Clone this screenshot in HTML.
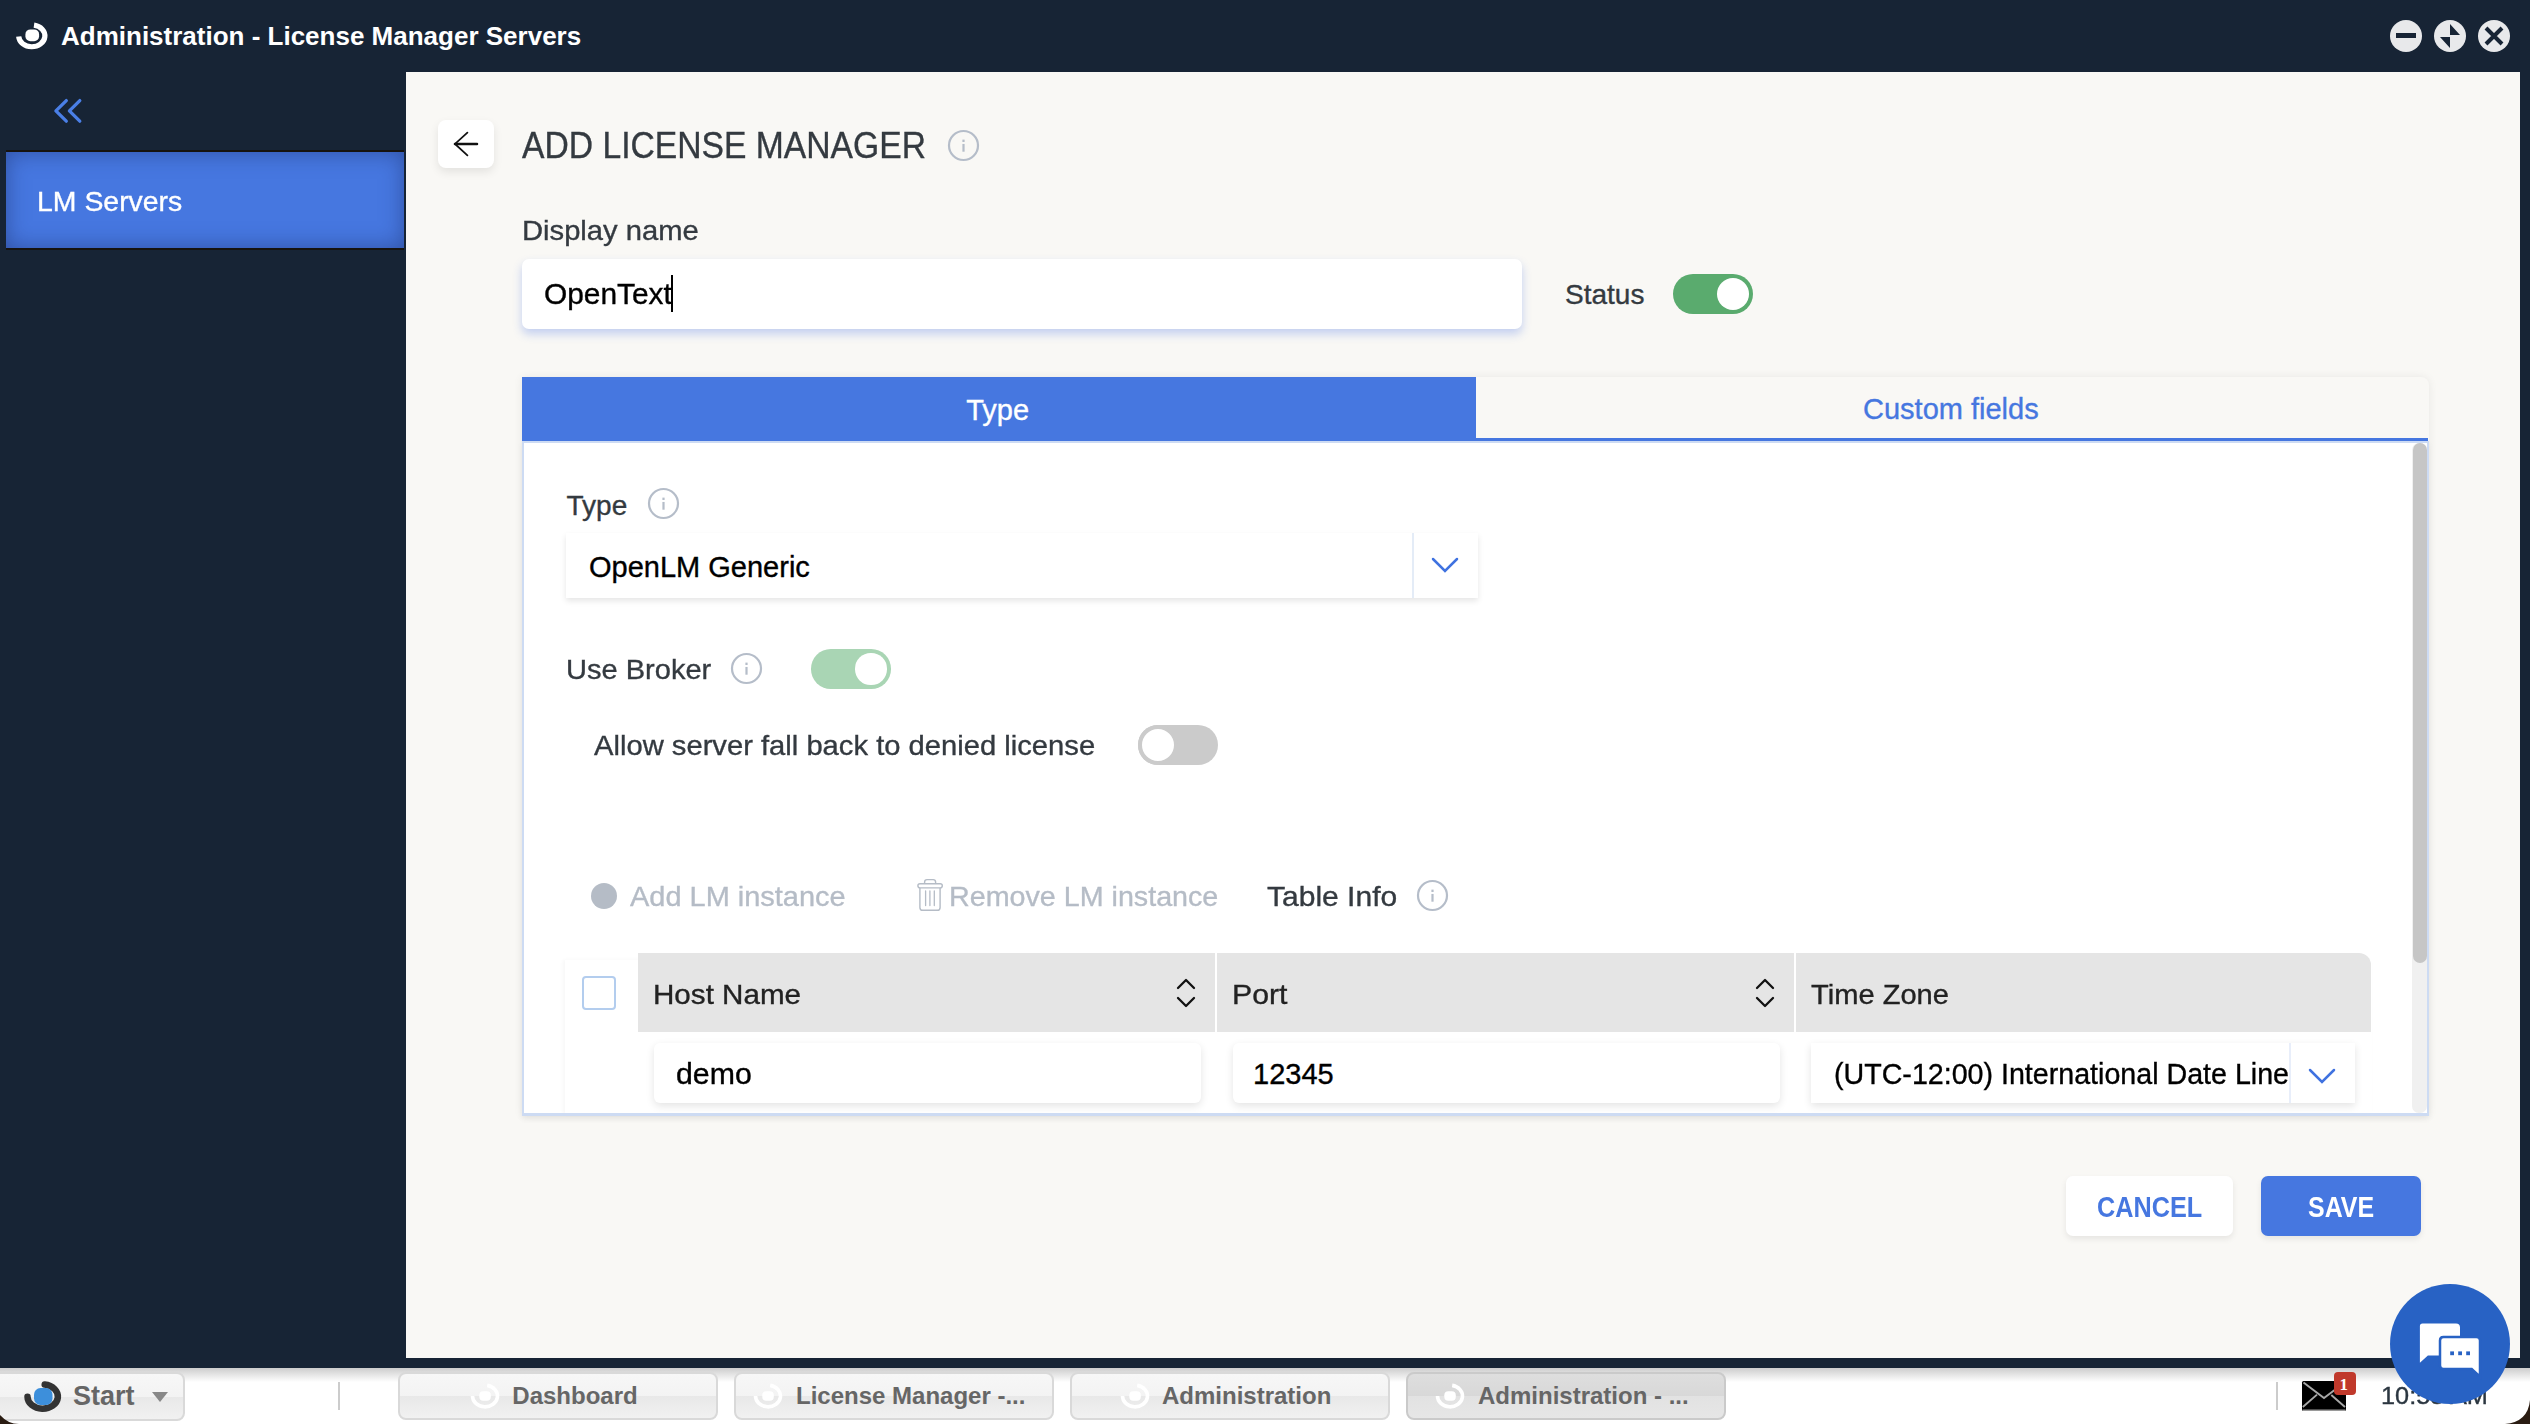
<!DOCTYPE html>
<html><head><meta charset="utf-8">
<style>
*{margin:0;padding:0;box-sizing:border-box}
html,body{width:2530px;height:1424px;overflow:hidden;background:#172435;font-family:"Liberation Sans",sans-serif}
.a{position:absolute}
.t{position:absolute;white-space:nowrap;line-height:1}
</style></head>
<body>
<div class="a" style="left:0px;top:0px;width:2530px;height:1424px;background:#172435"></div>
<div class="a" style="left:406px;top:72px;width:2114px;height:1286px;background:#f9f8f5"></div>
<svg class="a" style="left:0px;top:0px" width="60" height="60" viewBox="0 0 60 60">
<path d="M34 25.1 A13.1 10.9 0 1 1 18.7 36.5" fill="none" stroke="#fff" stroke-width="5.2" stroke-linecap="butt" style="filter:blur(0.4px)"/>
<rect x="25.4" y="29.4" width="13.7" height="11.8" rx="5" fill="#fff" style="filter:blur(0.4px)"/></svg>
<div class="t" style="left:61.0px;top:22.8px;font-size:26px;color:#fff;font-weight:bold;">Administration - License Manager Servers</div>
<div class="a" style="left:2390px;top:20px;width:32px;height:32px;background:#e8e9eb;border-radius:50%"></div>
<div class="a" style="left:2434px;top:20px;width:32px;height:32px;background:#e8e9eb;border-radius:50%"></div>
<div class="a" style="left:2478px;top:20px;width:32px;height:32px;background:#e8e9eb;border-radius:50%"></div>
<div class="a" style="left:2396px;top:33px;width:20px;height:5px;background:#172435"></div>
<svg class="a" style="left:2434px;top:20px" width="32" height="32" viewBox="0 0 32 32">
<path d="M16 4 L26 15 L16 15 Z M16 28 L6 17 L16 17 Z" fill="#172435"/></svg>
<svg class="a" style="left:2478px;top:20px" width="32" height="32" viewBox="0 0 32 32">
<path d="M8 8 L24 24 M24 8 L8 24" stroke="#172435" stroke-width="4"/></svg>
<svg class="a" style="left:46px;top:92px" width="42" height="38" viewBox="46 92 42 38">
<path d="M66.3 100.6 L55.9 110.9 L66.3 121.2 M79.8 100.6 L69.4 110.9 L79.8 121.2" fill="none" stroke="#4a7fe6" stroke-width="3.3" stroke-linecap="round" stroke-linejoin="round"/></svg>
<div class="a" style="left:6px;top:150px;width:398px;height:100px;background:#16130f"></div>
<div class="a" style="left:6px;top:152px;width:398px;height:96px;background:#4677e0;box-shadow:inset 0 0 22px rgba(30,50,110,0.55)"></div>
<div class="t" style="left:36.5px;top:188.0px;font-size:28px;color:#fff;-webkit-text-stroke:0.35px #fff;transform:scaleX(1.015);transform-origin:0 0;">LM Servers</div>
<div class="a" style="left:438px;top:120px;width:56px;height:48px;background:#fff;border-radius:8px;box-shadow:0 4px 10px rgba(0,0,0,0.09)"></div>
<svg class="a" style="left:438px;top:120px" width="56" height="48" viewBox="438 120 56 48">
<path d="M455 143.9 L477 143.9" fill="none" stroke="#111" stroke-width="2.5" stroke-linecap="round"/>
<path d="M467.4 132.6 L455 143.9 L467.4 155.3" fill="none" stroke="#111" stroke-width="1.8" stroke-linecap="round"/></svg>
<div class="t" style="left:522.0px;top:127.5px;font-size:36px;color:#343a40;-webkit-text-stroke:0.35px #343a40;transform:scaleX(0.935);transform-origin:0 0;">ADD LICENSE MANAGER</div>
<svg class="a" style="left:946.1px;top:127.5px" width="35.0" height="35.0" viewBox="-17.5 -17.5 35.0 35.0">
<circle cx="0" cy="0" r="14.5" fill="none" stroke="#b5bdc9" stroke-width="2.2"/>
<rect x="-1.1" y="-1.55" width="2.2" height="7.75" fill="#b5bdc9"/>
<rect x="-1.1" y="-5.89" width="2.2" height="2.4" fill="#b5bdc9"/></svg>
<div class="t" style="left:522.0px;top:217.3px;font-size:28px;color:#343a40;-webkit-text-stroke:0.35px #343a40;transform:scaleX(1.042);transform-origin:0 0;">Display name</div>
<div class="a" style="left:522px;top:259px;width:1000px;height:70px;background:#fff;border-radius:7px;box-shadow:0 5px 10px rgba(55,100,225,0.28)"></div>
<div class="t" style="left:544.0px;top:279.9px;font-size:29px;color:#000;-webkit-text-stroke:0.35px #000;transform:scaleX(1.03);transform-origin:0 0;">OpenText</div>
<div class="a" style="left:671px;top:275px;width:2px;height:37px;background:#000"></div>
<div class="t" style="left:1565.0px;top:281.3px;font-size:28px;color:#343a40;-webkit-text-stroke:0.35px #343a40;">Status</div>
<div class="a" style="left:1673px;top:274px;width:80px;height:40px;background:#5aab6e;border-radius:20.0px"></div>
<div class="a" style="left:1717px;top:278px;width:32px;height:32px;background:#fff;border-radius:50%;"></div>
<div class="a" style="left:522px;top:377px;width:1907px;height:739px;background:#f9f8f5;border-radius:0 8px 0 0;box-shadow:0 0 10px rgba(0,0,0,0.07)"></div>
<div class="a" style="left:522px;top:377px;width:954px;height:64px;background:#4677e0"></div>
<div class="a" style="left:1476px;top:438px;width:952px;height:3px;background:#4677e0"></div>
<div class="t" style="left:966.2px;top:395.5px;font-size:29px;color:#fff;-webkit-text-stroke:0.35px #fff;">Type</div>
<div class="t" style="left:1863.0px;top:395.3px;font-size:29px;color:#4677e0;-webkit-text-stroke:0.35px #4677e0;">Custom fields</div>
<div class="a" style="left:522px;top:441px;width:1907px;height:675px;background:#fff;border:2px solid #cddbf3;box-shadow:0 3px 6px rgba(0,0,0,0.05)"></div>
<div class="a" style="left:2412px;top:443px;width:15px;height:670px;background:#f0f0f0;border-radius:7px"></div>
<div class="a" style="left:2413px;top:443px;width:14px;height:520px;background:#c6c6c6;border-radius:7px"></div>
<div class="t" style="left:566.5px;top:492.3px;font-size:28px;color:#343a40;-webkit-text-stroke:0.35px #343a40;">Type</div>
<svg class="a" style="left:645.8px;top:486.3px" width="35.0" height="35.0" viewBox="-17.5 -17.5 35.0 35.0">
<circle cx="0" cy="0" r="14.5" fill="none" stroke="#b5bdc9" stroke-width="2.2"/>
<rect x="-1.1" y="-1.55" width="2.2" height="7.75" fill="#b5bdc9"/>
<rect x="-1.1" y="-5.89" width="2.2" height="2.4" fill="#b5bdc9"/></svg>
<div class="a" style="left:566px;top:533px;width:912px;height:65px;background:#fff;box-shadow:0 3px 6px rgba(0,0,0,0.10)"></div>
<div class="a" style="left:1412px;top:533px;width:2px;height:65px;background:#e4ecf7"></div>
<svg class="a" style="left:1429.8px;top:556.3px" width="30" height="18" viewBox="0 0 30 18">
<path d="M3 3 L15.0 15 L27 3" fill="none" stroke="#3f72e0" stroke-width="2.5" stroke-linecap="round"/></svg>
<div class="t" style="left:589.0px;top:552.5px;font-size:29px;color:#000;-webkit-text-stroke:0.35px #000;">OpenLM Generic</div>
<div class="t" style="left:565.5px;top:656.3px;font-size:28px;color:#343a40;-webkit-text-stroke:0.35px #343a40;transform:scaleX(1.037);transform-origin:0 0;">Use Broker</div>
<svg class="a" style="left:729.1px;top:650.9px" width="35.0" height="35.0" viewBox="-17.5 -17.5 35.0 35.0">
<circle cx="0" cy="0" r="14.5" fill="none" stroke="#b5bdc9" stroke-width="2.2"/>
<rect x="-1.1" y="-1.55" width="2.2" height="7.75" fill="#b5bdc9"/>
<rect x="-1.1" y="-5.89" width="2.2" height="2.4" fill="#b5bdc9"/></svg>
<div class="a" style="left:810.5px;top:649px;width:80.0px;height:39.5px;background:#a9d5b4;border-radius:19.75px"></div>
<div class="a" style="left:855.0px;top:653px;width:31.5px;height:31.5px;background:#fff;border-radius:50%;"></div>
<div class="t" style="left:594.0px;top:732.3px;font-size:28px;color:#343a40;-webkit-text-stroke:0.35px #343a40;transform:scaleX(1.042);transform-origin:0 0;">Allow server fall back to denied license</div>
<div class="a" style="left:1138px;top:725px;width:80px;height:40px;background:#cbcbcb;border-radius:20px"></div>
<div class="a" style="left:1138px;top:725px;width:40px;height:40px;background:#fff;border-radius:50%;border:4px solid #cbcbcb"></div>
<div class="a" style="left:591px;top:883px;width:26px;height:26px;background:#b5bcc6;border-radius:50%"></div>
<div class="t" style="left:630.0px;top:882.9px;font-size:28px;color:#b5bcc6;-webkit-text-stroke:0.35px #b5bcc6;transform:scaleX(1.034);transform-origin:0 0;">Add LM instance</div>
<svg class="a" style="left:910px;top:874px" width="40" height="42" viewBox="910 874 40 42">
<g fill="none" stroke="#b5bcc6" stroke-width="1.4">
<rect x="917.9" y="883.7" width="24.4" height="4.2" rx="2.1"/>
<path d="M924.6 883.7 V882 Q924.6 879.6 927 879.6 H933.2 Q935.6 879.6 935.6 882 V883.7"/>
<path d="M919.9 888 V907.4 Q919.9 910.3 922.8 910.3 H937.2 Q940.1 910.3 940.1 907.4 V888"/>
<path d="M925.6 891 V905.6 M929.9 891 V905.6 M934.3 891 V905.6" stroke-width="1.3" stroke-linecap="round"/>
</g></svg>
<div class="t" style="left:948.5px;top:882.9px;font-size:28px;color:#b5bcc6;-webkit-text-stroke:0.35px #b5bcc6;transform:scaleX(1.024);transform-origin:0 0;">Remove LM instance</div>
<div class="t" style="left:1266.5px;top:882.9px;font-size:28px;color:#343a40;-webkit-text-stroke:0.35px #343a40;transform:scaleX(1.072);transform-origin:0 0;">Table Info</div>
<svg class="a" style="left:1415.4px;top:877.5px" width="35.0" height="35.0" viewBox="-17.5 -17.5 35.0 35.0">
<circle cx="0" cy="0" r="14.5" fill="none" stroke="#b5bdc9" stroke-width="2.2"/>
<rect x="-1.1" y="-1.55" width="2.2" height="7.75" fill="#b5bdc9"/>
<rect x="-1.1" y="-5.89" width="2.2" height="2.4" fill="#b5bdc9"/></svg>
<div class="a" style="left:565px;top:960px;width:1807px;height:154px;background:#fff;box-shadow:-2px 0 4px rgba(0,0,0,0.035)"></div>
<div class="a" style="left:582px;top:976px;width:34px;height:34px;background:#fff;border:2px solid #b3cdee;border-radius:4px"></div>
<div class="a" style="left:638px;top:953px;width:1733px;height:79px;background:#e5e5e5;border-radius:0 12px 0 0"></div>
<div class="a" style="left:1215px;top:953px;width:2px;height:79px;background:#fff"></div>
<div class="a" style="left:1794px;top:953px;width:2px;height:79px;background:#fff"></div>
<div class="t" style="left:652.5px;top:980.9px;font-size:28px;color:#222;-webkit-text-stroke:0.35px #222;transform:scaleX(1.057);transform-origin:0 0;">Host Name</div>
<div class="t" style="left:1231.5px;top:980.9px;font-size:28px;color:#222;-webkit-text-stroke:0.35px #222;transform:scaleX(1.08);transform-origin:0 0;">Port</div>
<div class="t" style="left:1811.0px;top:981.3px;font-size:28px;color:#222;-webkit-text-stroke:0.35px #222;transform:scaleX(1.039);transform-origin:0 0;">Time Zone</div>
<svg class="a" style="left:1174px;top:976px" width="24" height="34" viewBox="0 0 24 34">
<path d="M4 12 L12 4 L20 12 M4 22 L12 30 L20 22" fill="none" stroke="#111" stroke-width="2.3" stroke-linecap="round" stroke-linejoin="round"/></svg>
<svg class="a" style="left:1753px;top:976px" width="24" height="34" viewBox="0 0 24 34">
<path d="M4 12 L12 4 L20 12 M4 22 L12 30 L20 22" fill="none" stroke="#111" stroke-width="2.3" stroke-linecap="round" stroke-linejoin="round"/></svg>
<div class="a" style="left:654px;top:1043px;width:547px;height:60px;background:#fff;border-radius:6px;box-shadow:0 3px 8px rgba(0,0,0,0.11)"></div>
<div class="t" style="left:675.8px;top:1059.5px;font-size:29px;color:#000;-webkit-text-stroke:0.35px #000;transform:scaleX(1.044);transform-origin:0 0;">demo</div>
<div class="a" style="left:1233px;top:1043px;width:547px;height:60px;background:#fff;border-radius:6px;box-shadow:0 3px 8px rgba(0,0,0,0.11)"></div>
<div class="t" style="left:1253.0px;top:1059.5px;font-size:29px;color:#000;-webkit-text-stroke:0.35px #000;">12345</div>
<div class="a" style="left:1811px;top:1043px;width:544px;height:60px;background:#fff;box-shadow:0 3px 8px rgba(0,0,0,0.11)"></div>
<div class="a" style="left:1833px;top:1050px;width:456px;height:50px;overflow:hidden">
<div class="t" style="left:0.9px;top:9.5px;font-size:29px;color:#000;-webkit-text-stroke:0.35px #000;transform:scaleX(0.987);transform-origin:0 0;">(UTC-12:00) International Date Line West</div>
</div>
<div class="a" style="left:2289px;top:1043px;width:2px;height:60px;background:#e8eefa"></div>
<svg class="a" style="left:2306.7px;top:1066.5px" width="30" height="18" viewBox="0 0 30 18">
<path d="M3 3 L15.0 15 L27 3" fill="none" stroke="#3f72e0" stroke-width="2.5" stroke-linecap="round"/></svg>
<div class="a" style="left:522px;top:1113px;width:1907px;height:3px;background:#cddbf3"></div>
<div class="a" style="left:2066px;top:1176px;width:167px;height:60px;background:#fff;border-radius:7px;box-shadow:0 3px 6px rgba(0,0,0,0.08)"></div>
<div class="t" style="left:2096.8px;top:1192.9px;font-size:29px;color:#4677e0;font-weight:bold;transform:scaleX(0.87);transform-origin:0 0;">CANCEL</div>
<div class="a" style="left:2261px;top:1176px;width:160px;height:60px;background:#4677e0;border-radius:7px;box-shadow:0 3px 6px rgba(0,0,0,0.08)"></div>
<div class="t" style="left:2307.5px;top:1192.9px;font-size:29px;color:#fff;font-weight:bold;transform:scaleX(0.86);transform-origin:0 0;">SAVE</div>
<div class="a" style="left:0px;top:1368px;width:2530px;height:56px;background:linear-gradient(#cdcdcd,#ffffff 14px,#ffffff)"></div>
<div class="a" style="left:-10px;top:1372px;width:195px;height:49px;background:linear-gradient(#f7f7f7,#f3f3f3 50%,#e8e8e8 50%,#f1f1f1);border:2px solid #d9d9d9;border-radius:8px"></div>
<svg class="a" style="left:0px;top:1360px" width="80" height="64" viewBox="0 0 80 64">
<path d="M44.7 24.6 A15.2 12.1 0 1 1 27.5 36.7" fill="none" stroke="#333" stroke-width="6.5" stroke-linecap="round"/>
<rect x="34" y="28" width="18.5" height="17" rx="6.5" fill="#3d8fdb"/></svg>
<div class="t" style="left:73.0px;top:1383.1px;font-size:27px;color:#666;font-weight:bold;">Start</div>
<svg class="a" style="left:150px;top:1390px" width="20" height="14" viewBox="0 0 20 14"><path d="M2 2 H18 L10 12 Z" fill="#888"/></svg>
<div class="a" style="left:338px;top:1382px;width:2px;height:28px;background:#ccc"></div>
<div class="a" style="left:398px;top:1372px;width:320px;height:48px;background:linear-gradient(#f7f7f7,#f3f3f3 50%,#e8e8e8 50%,#f1f1f1);border:2px solid #d9d9d9;border-radius:8px"></div>
<svg class="a" style="left:464.5px;top:1376px;opacity:1.0;filter:blur(0.6px)" width="40" height="40" viewBox="0 0 40 40">
<path d="M22.2 9.4 A12.5 10.8 0 1 1 7.5 20" fill="none" stroke="#fff" stroke-width="3.6"/>
<rect x="14.3" y="15.3" width="11.5" height="9.4" rx="4" fill="#fff"/></svg>
<div class="t" style="left:512.3px;top:1384.2px;font-size:24px;color:#666;font-weight:bold;">Dashboard</div>
<div class="a" style="left:734px;top:1372px;width:320px;height:48px;background:linear-gradient(#f7f7f7,#f3f3f3 50%,#e8e8e8 50%,#f1f1f1);border:2px solid #d9d9d9;border-radius:8px"></div>
<svg class="a" style="left:748px;top:1376px;opacity:1.0;filter:blur(0.6px)" width="40" height="40" viewBox="0 0 40 40">
<path d="M22.2 9.4 A12.5 10.8 0 1 1 7.5 20" fill="none" stroke="#fff" stroke-width="3.6"/>
<rect x="14.3" y="15.3" width="11.5" height="9.4" rx="4" fill="#fff"/></svg>
<div class="t" style="left:796.0px;top:1384.2px;font-size:24px;color:#666;font-weight:bold;">License Manager -...</div>
<div class="a" style="left:1070px;top:1372px;width:320px;height:48px;background:linear-gradient(#f7f7f7,#f3f3f3 50%,#e8e8e8 50%,#f1f1f1);border:2px solid #d9d9d9;border-radius:8px"></div>
<svg class="a" style="left:1114.5px;top:1376px;opacity:1.0;filter:blur(0.6px)" width="40" height="40" viewBox="0 0 40 40">
<path d="M22.2 9.4 A12.5 10.8 0 1 1 7.5 20" fill="none" stroke="#fff" stroke-width="3.6"/>
<rect x="14.3" y="15.3" width="11.5" height="9.4" rx="4" fill="#fff"/></svg>
<div class="t" style="left:1162.0px;top:1384.2px;font-size:24px;color:#666;font-weight:bold;">Administration</div>
<div class="a" style="left:1406px;top:1372px;width:320px;height:48px;background:linear-gradient(#dedede,#d8d8d8 50%,#e2e2e2 50%,#e6e6e6);border:2px solid #cacaca;border-radius:8px"></div>
<svg class="a" style="left:1430px;top:1376px;opacity:1.0;filter:blur(0.6px)" width="40" height="40" viewBox="0 0 40 40">
<path d="M22.2 9.4 A12.5 10.8 0 1 1 7.5 20" fill="none" stroke="#fff" stroke-width="3.6"/>
<rect x="14.3" y="15.3" width="11.5" height="9.4" rx="4" fill="#fff"/></svg>
<div class="t" style="left:1478.0px;top:1384.2px;font-size:24px;color:#666;font-weight:bold;">Administration - ...</div>
<div class="a" style="left:2276px;top:1382px;width:2px;height:28px;background:#ccc"></div>
<svg class="a" style="left:2300px;top:1378px" width="50" height="36" viewBox="2300 1378 50 36">
<rect x="2302" y="1381" width="44" height="30" rx="1.5" fill="#000"/>
<path d="M2303.5 1382.5 L2324 1398 L2344.5 1382.5 M2302.8 1407 L2317 1394.6 M2331.3 1395 L2345 1407" fill="none" stroke="#a8a8a8" stroke-width="1.9"/>
<path d="M2302.5 1410.2 H2345.5" stroke="#9a9a9a" stroke-width="1.4"/></svg>
<div class="a" style="left:2334px;top:1372px;width:22px;height:23px;background:#c0392b;border-radius:4px"></div>
<div class="t" style="left:2339.5px;top:1375.6px;font-size:17px;color:#fff;font-weight:bold;font-family:'Liberation Serif',serif;">1</div>
<div class="t" style="left:2381.0px;top:1385.0px;font-size:23px;color:#2b3640;-webkit-text-stroke:0.35px #2b3640;transform:scaleX(1.1);transform-origin:0 0;">10:55 AM</div>
<div class="a" style="left:0px;top:1358px;width:2530px;height:10px;background:#172435"></div>
<div class="a" style="left:406px;top:1358px;width:2114px;height:10px;background:#172435"></div>
<div class="a" style="left:2390px;top:1284px;width:120px;height:120px;background:#2862c4;border-radius:50%"></div>
<svg class="a" style="left:2410px;top:1310px" width="80" height="80" viewBox="0 0 80 80">
<path d="M12.5 13.4 H46 Q50 13.4 50 17.4 V26 H33 Q29.5 26 29.5 29.5 V45.6 H17.9 L9.9 52.8 V16 Q9.9 13.4 12.5 13.4 Z" fill="#fff"/>
<path d="M33.5 27 H66.5 Q70 27 70 30.5 V66.7 L61.7 59 H33.5 Q30 59 30 55.5 V30.5 Q30 27 33.5 27 Z" fill="#fff" stroke="#2862c4" stroke-width="2.5"/>
<rect x="40.2" y="41.4" width="3.8" height="3.8" fill="#2862c4"/><rect x="48.2" y="41.4" width="3.8" height="3.8" fill="#2862c4"/><rect x="56.2" y="41.4" width="3.8" height="3.8" fill="#2862c4"/></svg>
<svg class="a" style="left:0;top:1400px" width="30" height="24" viewBox="0 0 30 24"><path d="M0 15 Q8 24 19 24 L0 24 Z" fill="#2a1c12"/></svg>
<svg class="a" style="left:2500px;top:1396px" width="30" height="28" viewBox="0 0 30 28"><path d="M30 4 Q28 26 5 28 L30 28 Z" fill="#2a1c12"/></svg>
</body></html>
